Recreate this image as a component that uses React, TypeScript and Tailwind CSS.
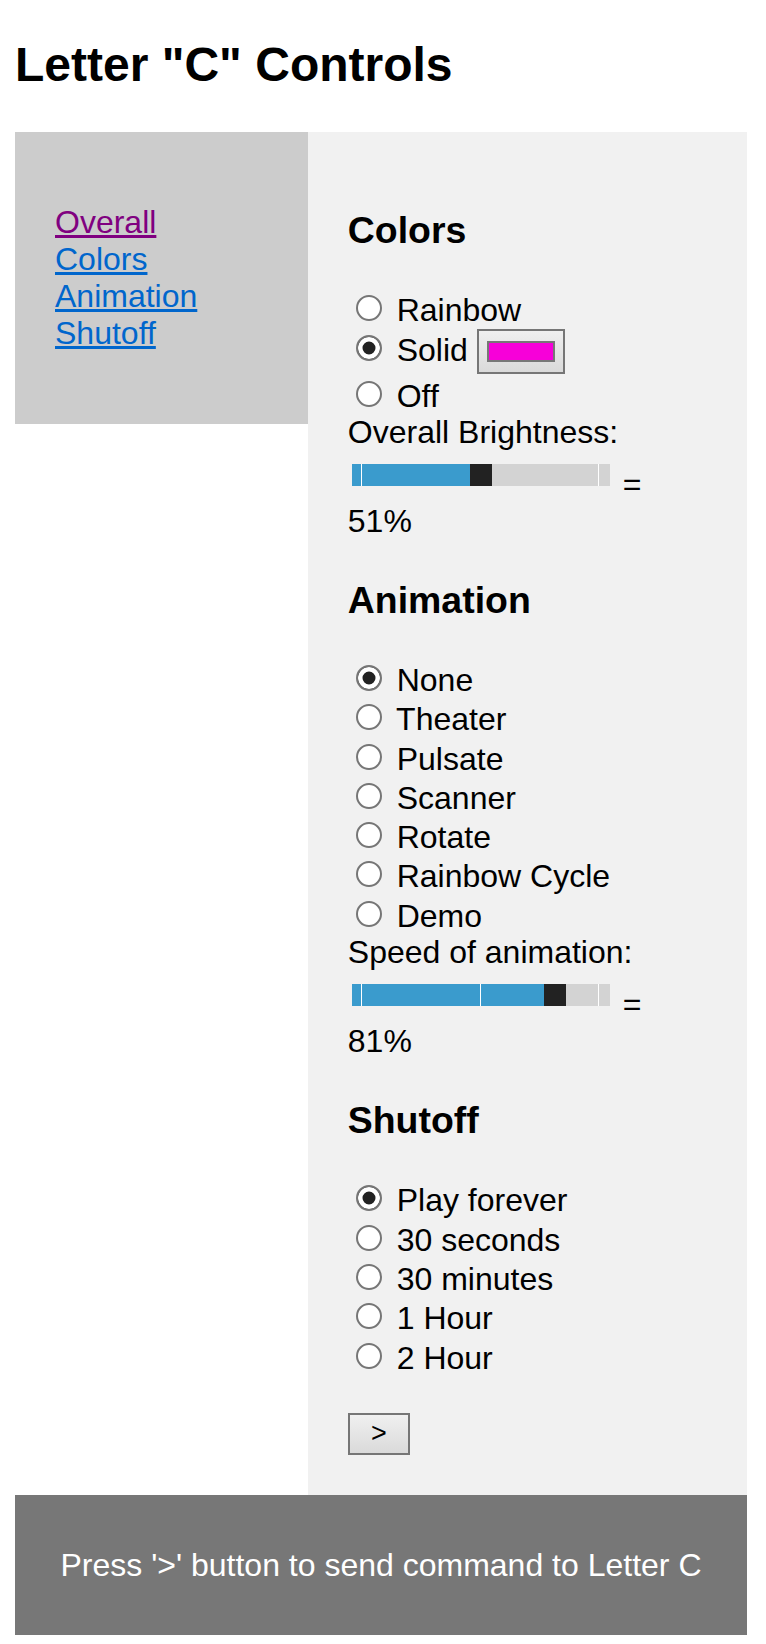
import React from 'react';

type Option = { label: string; checked?: boolean; swatch?: boolean };

const colorOptions: Option[] = [
  { label: 'Rainbow' },
  { label: 'Solid', checked: true, swatch: true },
  { label: 'Off' },
];

const animationOptions: Option[] = [
  { label: 'None', checked: true },
  { label: 'Theater' },
  { label: 'Pulsate' },
  { label: 'Scanner' },
  { label: 'Rotate' },
  { label: 'Rainbow Cycle' },
  { label: 'Demo' },
];

const shutoffOptions: Option[] = [
  { label: 'Play forever', checked: true },
  { label: '30 seconds' },
  { label: '30 minutes' },
  { label: '1 Hour' },
  { label: '2 Hour' },
];

function Radio({ checked }: { checked?: boolean }) {
  return (
    <span
      className={
        checked
          ? 'inline-block w-[26px] h-[26px] mt-[6px] ml-[8px] mr-[6px] rounded-full border-2 border-[#767676] bg-[#222222] shadow-[inset_0_0_0_4.5px_#ffffff]'
          : 'inline-block w-[26px] h-[26px] mt-[6px] ml-[8px] mr-[6px] rounded-full border-2 border-[#767676] bg-white'
      }
    />
  );
}

function ColorSwatch() {
  return (
    <span className="inline-block align-[-12.6px] w-[88px] h-[45px] border-2 border-[#767676] bg-gradient-to-b from-[#efefef] to-[#dadada] px-[8px] py-[10px]">
      <span className="block w-[68px] h-[21px] border-2 border-[#777777] bg-[#f700d9]" />
    </span>
  );
}

function RadioList({ options }: { options: Option[] }) {
  return (
    <div>
      {options.map((o) => (
        <div key={o.label} className={o.swatch ? 'h-[46px]' : 'h-[39.3px]'}>
          <Radio checked={o.checked} /> {o.label}
          {o.swatch && (
            <>
              {' '}
              <ColorSwatch />
            </>
          )}
        </div>
      ))}
    </div>
  );
}

function Slider({ thumb }: { thumb: number }) {
  return (
    <div className="relative w-[258px] h-[22px] bg-[#d3d3d3]">
      <div className="absolute inset-y-0 left-0 bg-[#3a9bcd]" style={{ width: thumb }} />
      <div className="absolute inset-y-0 left-[9px] w-[1.5px] bg-white" />
      <div className="absolute inset-y-0 left-[128px] w-[1.5px] bg-white" />
      <div className="absolute inset-y-0 left-[246px] w-[1.5px] bg-white" />
      <div className="absolute inset-y-0 w-[22px] bg-[#222222]" style={{ left: thumb }} />
    </div>
  );
}

function SliderField({ label, thumb, value }: { label: string; thumb: number; value: string }) {
  return (
    <div>
      <div className="h-[36.8px]">{label}</div>
      <div className="flex h-[52.5px]">
        <div className="mt-[13.6px] ml-[4px] mr-[4px]">
          <Slider thumb={thumb} />
        </div>
        <span className="self-end ml-[8.9px]">=</span>
      </div>
      <div className="h-[36.8px]">{value}</div>
    </div>
  );
}

export default function App() {
  return (
    <div className="min-h-screen bg-white text-black font-['Liberation_Sans',Arial,sans-serif] leading-[normal] text-[32px]">
      <div className="ml-[15px] w-[732px] pb-[8px]">
        {/* Header */}
        <h2 className="pt-[36.5px] mb-[40px] text-[48px] font-bold leading-[normal]">{'Letter "C" Controls'}</h2>

        <div className="flex items-start">
          {/* Nav */}
          <nav className="w-[40%] bg-[#cccccc] px-[40px] py-[72px]">
            <a href="#overall" className="block w-fit text-[#800080] underline">Overall</a>
            <a href="#colors" className="block w-fit text-[#0066cc] underline">Colors</a>
            <a href="#animation" className="block w-fit text-[#0066cc] underline">Animation</a>
            <a href="#shutoff" className="block w-fit text-[#0066cc] underline">Shutoff</a>
          </nav>

          {/* Controls */}
          <main className="w-[60%] bg-[#f1f1f1] p-[40px]">
            <section id="colors">
              <h3 className="my-[37.44px] text-[37.44px] font-bold">Colors</h3>
              <RadioList options={colorOptions} />
              <SliderField label="Overall Brightness:" thumb={118} value="51%" />
            </section>

            <section id="animation" className="pt-[1px]">
              <h3 className="my-[37.44px] text-[37.44px] font-bold">Animation</h3>
              <RadioList options={animationOptions} />
              <SliderField label="Speed of animation:" thumb={192} value="81%" />
            </section>

            <section id="shutoff" className="pt-[1.5px]">
              <h3 className="my-[37.44px] text-[37.44px] font-bold">Shutoff</h3>
              <RadioList options={shutoffOptions} />
              <div className="mt-[36.8px]">
                <button className="w-[62px] h-[42.4px] border-2 border-[#767676] bg-gradient-to-b from-[#f0f0f0] to-[#dadada] text-[27px] leading-none text-black">
                  &gt;
                </button>
              </div>
            </section>
          </main>
        </div>

        {/* Footer */}
        <footer className="flex h-[140px] items-center justify-center bg-[#777777] text-white">
          {"Press '>' button to send command to Letter C"}
        </footer>
      </div>
    </div>
  );
}
